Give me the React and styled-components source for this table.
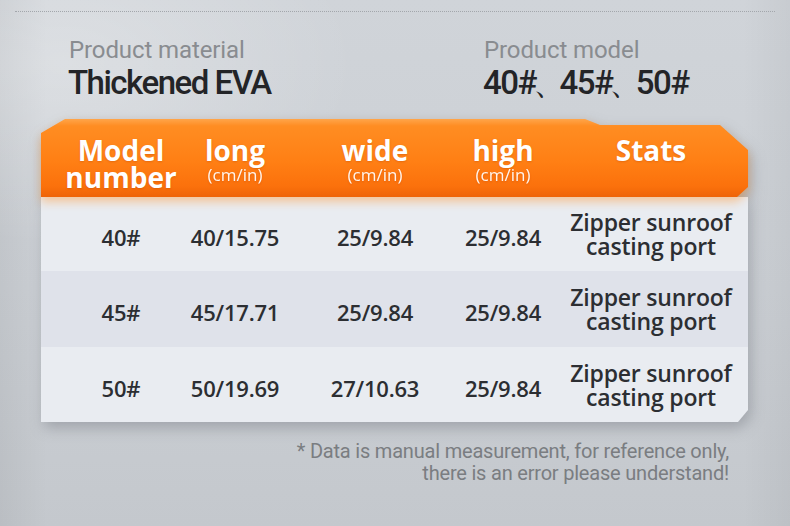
import React from "react";
import styled, { createGlobalStyle } from "styled-components";

// ----------------------------------------------------
// global
// ----------------------------------------------------
const GlobalStyle = createGlobalStyle`
  html, body {
    margin: 0;
    padding: 0;
  }
  body {
    font-family: Roboto, "Noto Sans", sans-serif;
  }
`;

const Page = styled.div`
  width: 790px;
  height: 526px;
  box-sizing: border-box;
  padding-top: 11px;
  overflow: hidden;
  background:
    radial-gradient(ellipse 420px 260px at 8% 12%, rgba(255, 255, 255, 0.28), transparent 70%),
    linear-gradient(90deg, rgba(0, 0, 0, 0.05) 0%, transparent 6%, transparent 94%, rgba(0, 0, 0, 0.04) 100%),
    linear-gradient(180deg, #d0d4d9 0%, #cbcfd4 55%, #c4c8cd 100%);
`;

const DottedLine = styled.div`
  margin: 0 15px;
  border-top: 1px dotted #a3a7ac;
`;

// ----------------------------------------------------
// 상단 스펙
// ----------------------------------------------------
const SpecRow = styled.div`
  display: grid;
  grid-template-columns: 415px 1fr;
  padding-left: 69px;
  margin-top: 24px;
`;

const SpecLabel = styled.div`
  font-size: 24px;
  line-height: 28px;
  color: #898c90;
  letter-spacing: -0.1px;
`;

const SpecValue = styled.div`
  font-size: 33px;
  line-height: 38px;
  font-weight: 500;
  color: #232427;
  letter-spacing: -1.5px;
  margin-left: -1px;
`;

const Sep = styled.span`
  margin: 0 -5px 0 -3px;
`;

// ----------------------------------------------------
// 표
// ----------------------------------------------------
const cols = [160, 68, 212, 44, 252];

const Table = styled.div`
  width: 707px;
  margin: 17px 0 0 41px;
  filter: drop-shadow(3px 6px 7px rgba(60, 66, 76, 0.28));
`;

const HeaderWrap = styled.div`
  position: relative;
  z-index: 1;
  filter: drop-shadow(0 5px 5px rgba(255, 150, 50, 0.45));
`;

const Header = styled.div`
  display: flex;
  height: 78px;
  box-sizing: border-box;
  padding-top: 18px;
  background: linear-gradient(
    180deg,
    #ffa54a 0%,
    #ff8d22 9%,
    #ff7f14 55%,
    #fb710c 86%,
    #ee6408 100%
  );
  clip-path: polygon(
    24px 0,
    544px 0,
    559px 6px,
    679px 6px,
    707px 31px,
    707px 68px,
    696px 78px,
    0 78px,
    0 14px
  );
`;

const HeadCell = styled.div`
  width: ${(p) => p.$w}px;
  flex: none;
  display: flex;
  flex-direction: column;
  align-items: center;
  color: #fff;
  font-family: "Open Sans", "Noto Sans", sans-serif;
  text-shadow: 0 1px 2px rgba(180, 70, 0, 0.35);
`;

const HeadTitle = styled.div`
  font-size: 28px;
  line-height: 27px;
  font-weight: 700;
  text-align: center;
  white-space: nowrap;
`;

const HeadUnit = styled.div`
  font-size: 17px;
  line-height: 20px;
  margin-top: 1px;
  opacity: 0.92;
`;

const Body = styled.div`
  clip-path: polygon(0 0, 100% 0, 100% calc(100% - 12px), calc(100% - 10px) 100%, 0 100%);
`;

const Row = styled.div`
  display: flex;
  height: ${(p) => p.$h}px;
  align-items: center;
  background: ${(p) => (p.$alt ? "#dfe2ea" : "#e9ecf1")};
`;

const Cell = styled.div`
  width: ${(p) => p.$w}px;
  flex: none;
  display: flex;
  justify-content: center;
  text-align: center;
  white-space: nowrap;
  color: #2c2e32;
  font-family: "Open Sans", "Noto Sans", sans-serif;
  font-weight: 600;
  font-size: ${(p) => (p.$small ? 23 : 22)}px;
  line-height: 24px;
  letter-spacing: -0.2px;
  margin-top: ${(p) => (p.$small ? 0 : 6)}px;
`;

// ----------------------------------------------------
// 하단 안내
// ----------------------------------------------------
const Note = styled.div`
  margin-top: 18px;
  padding-right: 61px;
  text-align: right;
  font-size: 20px;
  line-height: 22px;
  color: #7a7d81;
  letter-spacing: -0.2px;
`;

const rows = [
  { model: "40#", long: "40/15.75", wide: "25/9.84", high: "25/9.84", h: 74 },
  { model: "45#", long: "45/17.71", wide: "25/9.84", high: "25/9.84", h: 76 },
  { model: "50#", long: "50/19.69", wide: "27/10.63", high: "25/9.84", h: 75 },
];

const heads = [
  { title: "Model\nnumber" },
  { title: "long", unit: "(cm/in)" },
  { title: "wide", unit: "(cm/in)" },
  { title: "high", unit: "(cm/in)" },
  { title: "Stats" },
];

export default function App() {
  return (
    <>
      <GlobalStyle />
      <Page>
        <DottedLine />
        <SpecRow>
          <div>
            <SpecLabel>Product material</SpecLabel>
            <SpecValue>Thickened EVA</SpecValue>
          </div>
          <div>
            <SpecLabel>Product model</SpecLabel>
            <SpecValue>
              40#<Sep>、</Sep>45#<Sep>、</Sep>50#
            </SpecValue>
          </div>
        </SpecRow>

        <Table>
          <HeaderWrap>
            <Header>
              {heads.map((h, i) => (
                <HeadCell key={i} $w={cols[i]}>
                  {h.title.split("\n").map((line) => (
                    <HeadTitle key={line}>{line}</HeadTitle>
                  ))}
                  {h.unit && <HeadUnit>{h.unit}</HeadUnit>}
                </HeadCell>
              ))}
            </Header>
          </HeaderWrap>
          <Body>
            {rows.map((r, i) => (
              <Row key={r.model} $h={r.h} $alt={i === 1}>
                <Cell $w={cols[0]}>{r.model}</Cell>
                <Cell $w={cols[1]}>{r.long}</Cell>
                <Cell $w={cols[2]}>{r.wide}</Cell>
                <Cell $w={cols[3]}>{r.high}</Cell>
                <Cell $w={cols[4]} $small>
                  Zipper sunroof
                  <br />
                  casting port
                </Cell>
              </Row>
            ))}
          </Body>
        </Table>

        <Note>
          * Data is manual measurement, for reference only,
          <br />
          there is an error please understand!
        </Note>
      </Page>
    </>
  );
}
